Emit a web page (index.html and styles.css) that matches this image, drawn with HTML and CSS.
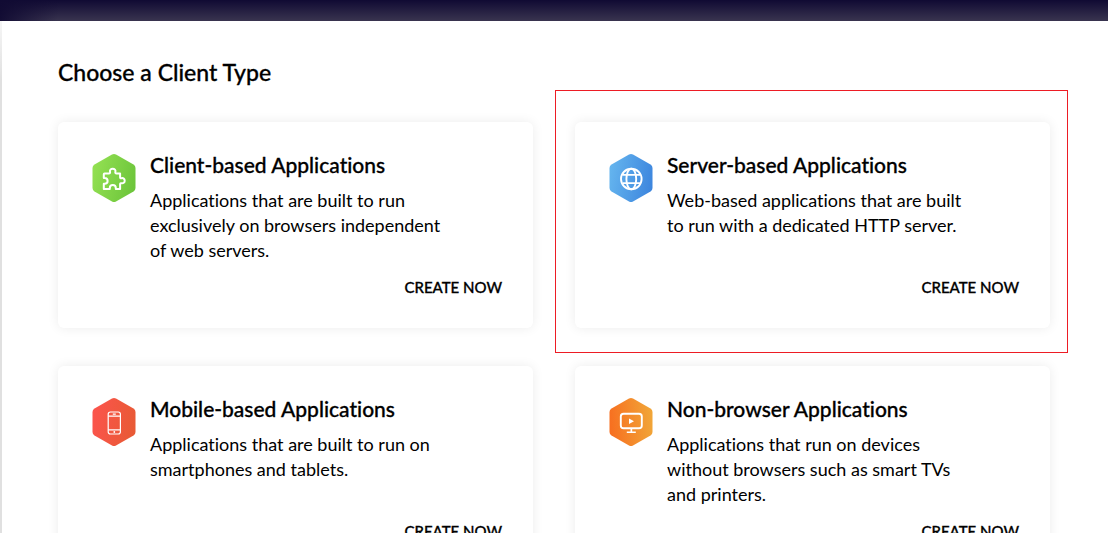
FILE: index.html
```html
<!DOCTYPE html>
<html lang="en">
<head>
<meta charset="utf-8">
<meta name="viewport" content="width=device-width, initial-scale=1">
<title>Choose a Client Type</title>
<link rel="stylesheet" href="styles.css">
</head>
<body>
<div class="topbar"></div>
<main class="panel">
  <h1 class="panel-title">Choose a Client Type</h1>
  <div class="cards">
    <section class="card">
      <svg class="card-icon" viewBox="0 0 44 48" aria-hidden="true">
        <defs><linearGradient id="green" x1="0" x2="1" y1="0.3" y2="0.6"><stop offset="0" stop-color="#93e052"/><stop offset="1" stop-color="#6dc53b"/></linearGradient></defs>
        <path fill="url(#green)" d="M20 .6q2-1.100 4 0l17.500 9.800q2 1.200 2 3.500v20.200q0 2.300-2 3.500L24 47.400q-2 1.100-4 0L2.500 37.600q-2-1.200-2-3.500V13.900q0-2.300 2-3.500z"/>
        <path fill="none" stroke="#fff" stroke-width="2" stroke-linejoin="round" d="M12.500 19.400h4.300c1.200 0 1.500-.7 1.200-1.700-.5-1.700.8-3 2.700-3s3.200 1.300 2.700 3c-.3 1 0 1.700 1.200 1.700h3.500v3.800c0 .9.500 1.200 1.300 1 1.900-.4 3.300.6 3.300 2.500s-1.400 2.900-3.300 2.500c-.8-.2-1.300.1-1.300 1v4.800h-4.300v-.900c0-1.900-1.100-3-3-3s-3 1.100-3 3v.900h-6v-5.300h.800c1.900 0 3-1 3-2.800s-1.100-2.800-3-2.800h-.8v-3.900q0-.8.700-.8z"/>
      </svg>
      <div class="card-body">
        <h2 class="card-title">Client-based Applications</h2>
        <p class="card-text">Applications that are built to run exclusively on browsers independent of web servers.</p>
      </div>
      <button class="create" type="button">CREATE NOW</button>
    </section>
    <section class="card card-marked">
      <svg class="card-icon" viewBox="0 0 44 48" aria-hidden="true">
        <defs><linearGradient id="blue" x1="0" x2="1" y1="0.4" y2="0.6"><stop offset="0" stop-color="#64b4ee"/><stop offset="1" stop-color="#3d86de"/></linearGradient></defs>
        <path fill="url(#blue)" d="M20 .6q2-1.100 4 0l17.500 9.800q2 1.200 2 3.500v20.200q0 2.300-2 3.500L24 47.400q-2 1.100-4 0L2.500 37.600q-2-1.200-2-3.500V13.900q0-2.300 2-3.500z"/>
        <g fill="none" stroke="#fff" stroke-width="1.900"><circle cx="22.300" cy="25" r="10.300"/><ellipse cx="22.300" cy="25" rx="4.900" ry="10.300"/><path d="M13.500 20.900h17.600M13.500 29.100h17.600"/></g>
      </svg>
      <div class="card-body">
        <h2 class="card-title">Server-based Applications</h2>
        <p class="card-text">Web-based applications that are built to run with a dedicated HTTP server.</p>
      </div>
      <button class="create" type="button">CREATE NOW</button>
    </section>
    <section class="card">
      <svg class="card-icon" viewBox="0 0 44 48" aria-hidden="true">
        <defs><linearGradient id="red" x1="0" x2="1" y1="0.4" y2="0.6"><stop offset="0" stop-color="#fb544c"/><stop offset="1" stop-color="#e85a35"/></linearGradient></defs>
        <path fill="url(#red)" d="M20 .6q2-1.100 4 0l17.500 9.800q2 1.200 2 3.500v20.200q0 2.300-2 3.500L24 47.400q-2 1.100-4 0L2.500 37.600q-2-1.200-2-3.500V13.900q0-2.300 2-3.500z"/>
        <g fill="none" stroke="#fff" stroke-width="1.200"><rect x="16.200" y="14" width="12.200" height="22" rx="2.200"/><path d="M16.200 18.200h12.200M16.200 31.800h12.200M20.800 16.200h3"/></g><circle cx="22.300" cy="34" r=".9" fill="#fff"/>
      </svg>
      <div class="card-body">
        <h2 class="card-title">Mobile-based Applications</h2>
        <p class="card-text">Applications that are built to run on smartphones and tablets.</p>
      </div>
      <button class="create" type="button">CREATE NOW</button>
    </section>
    <section class="card">
      <svg class="card-icon" viewBox="0 0 44 48" aria-hidden="true">
        <defs><linearGradient id="orange" x1="0" x2="1" y1="0.5" y2="0.4"><stop offset="0" stop-color="#f76f20"/><stop offset="1" stop-color="#f1a638"/></linearGradient></defs>
        <path fill="url(#orange)" d="M20 .6q2-1.100 4 0l17.500 9.800q2 1.200 2 3.500v20.200q0 2.300-2 3.500L24 47.400q-2 1.100-4 0L2.500 37.600q-2-1.200-2-3.500V13.900q0-2.300 2-3.500z"/>
        <rect x="11.800" y="15.800" width="21" height="14.400" rx="2.800" fill="none" stroke="#fff" stroke-width="1.900"/><path fill="#fff" d="M20 20.500l5 2.700-5 2.700zM21.500 30.500h1.700v3h3.600v1.500h-9v-1.500h3.700z"/>
      </svg>
      <div class="card-body">
        <h2 class="card-title">Non-browser Applications</h2>
        <p class="card-text">Applications that run on devices without browsers such as smart TVs and printers.</p>
      </div>
      <button class="create" type="button">CREATE NOW</button>
    </section>
  </div>
</main>
</body>
</html>
```
FILE: styles.css
```css
* {
  box-sizing: border-box;
}

body {
  margin: 0;
  height: 100vh;
  overflow: hidden;
  background: #fff;
  color: #000;
  font-family: Lato, "Open Sans", sans-serif;
  font-variant-ligatures: none;
}

.topbar {
  height: 21px;
  background: linear-gradient(100deg, #110b33 0, #110b3300 60px), linear-gradient(#100a33, #39344f);
}

.panel {
  min-height: 100%;
  padding: 36px 58px 38px;
  background: linear-gradient(#f6f6f6, #e0e0e0 60px) left / 2px 100% no-repeat #fff;
}

.panel-title {
  margin: 0 0 35px;
  font-size: 23px;
  font-weight: 500;
  line-height: 30px;
  -webkit-text-stroke: 0.3px;
}

.cards {
  display: grid;
  grid-template-columns: 1fr 1fr;
  gap: 38px 42px;
}

.card {
  position: relative;
  display: grid;
  grid-template-columns: 44px 1fr;
  grid-template-rows: 1fr auto;
  column-gap: 14px;
  min-height: 206px;
  padding: 30px 31px;
  padding-left: 34px;
  border-radius: 6px;
  background: #fff;
  box-shadow: 0 0 12px rgba(0, 0, 0, 0.08);
}

.card-marked::before {
  content: "";
  position: absolute;
  inset: -32px -18px -25px -20px;
  border: 1px solid #ed1c24;
  pointer-events: none;
}

.card-icon {
  width: 44px;
  height: 48px;
  margin-top: 2px;
}

.card-title {
  margin: 0 0 10px;
  font-size: 21px;
  font-weight: 500;
  line-height: 26px;
  -webkit-text-stroke: 0.3px;
}

.card-text {
  max-width: 310px;
  margin: 0;
  font-size: 18px;
  font-weight: 400;
  line-height: 25px;
}

.create {
  grid-column: 1 / -1;
  justify-self: end;
  padding: 0;
  border: 0;
  background: none;
  color: #000;
  font: 500 15px/22px Lato, "Open Sans", sans-serif;
  font-variant-ligatures: none;
  -webkit-text-stroke: 0.3px;
  cursor: pointer;
}
```
